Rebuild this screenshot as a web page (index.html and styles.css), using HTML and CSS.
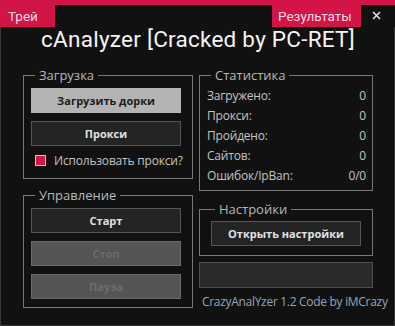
FILE: index.html
```html
<!DOCTYPE html>
<html lang="ru">

<head>
    <meta charset="UTF-8">
    <meta name="viewport" content="width=device-width, initial-scale=1.0">
    <title>cAnalyzer</title>
    <link rel="stylesheet" href="styles.css">
</head>

<body>
    <div class="window">
        <header class="titlebar">
            <div class="tab tab-tray">Трей</div>
            <div class="strip"></div>
            <div class="tab tab-results">Результаты</div>
            <div class="strip close">
                <svg width="9" height="9" viewBox="0 0 9 9">
                    <path d="M1 1 L8 8 M8 1 L1 8" stroke="#f2f2f2" stroke-width="1.4" />
                </svg>
            </div>
        </header>

        <div class="frame">
            <h1 class="title">cAnalyzer [Cracked by PC-RET]</h1>

            <div class="panels">
                <div class="column">
                    <fieldset class="group group-load">
                        <legend>Загрузка</legend>
                        <button class="btn btn-light">Загрузить дорки</button>
                        <button class="btn">Прокси</button>
                        <label class="check"><span class="box"></span>Использовать прокси?</label>
                    </fieldset>

                    <fieldset class="group group-control">
                        <legend>Управление</legend>
                        <button class="btn">Старт</button>
                        <button class="btn btn-off">Стоп</button>
                        <button class="btn btn-off">Пауза</button>
                    </fieldset>
                </div>

                <div class="column column-right">
                    <fieldset class="group group-stats">
                        <legend>Статистика</legend>
                        <div class="stat"><span>Загружено:</span><span>0</span></div>
                        <div class="stat"><span>Прокси:</span><span>0</span></div>
                        <div class="stat"><span>Пройдено:</span><span>0</span></div>
                        <div class="stat"><span>Сайтов:</span><span>0</span></div>
                        <div class="stat"><span>Ошибок/IpBan:</span><span>0/0</span></div>
                    </fieldset>

                    <fieldset class="group group-settings">
                        <legend>Настройки</legend>
                        <button class="btn">Открыть настройки</button>
                    </fieldset>

                    <div class="status"></div>
                    <p class="credit">CrazyAnalYzer 1.2 Code by iMCrazy</p>
                </div>
            </div>
        </div>
    </div>
</body>

</html>
```

FILE: styles.css
```css
:root {
    --bg: #111111;
    --red: #d31446;
    --line: #787878;
    --text: #c4c4c4;
}

body {
    margin: 0;
    background: var(--bg);
    font-family: "Open Sans", "Noto Sans", sans-serif;
}

.window {
    width: 395px;
    height: 326px;
    display: flex;
    flex-direction: column;
    background: var(--bg);
}

/* верхняя полоса с вкладками */
.titlebar {
    display: flex;
    height: 27px;
}

.tab {
    background: var(--red);
    color: #f4dde5;
    font-family: Roboto, sans-serif;
    font-size: 13.5px;
    line-height: 13px;
    padding-top: 10px;
    box-sizing: border-box;
}

.tab-tray {
    width: 55px;
    padding-left: 8px;
}

.tab-results {
    width: 89px;
    padding-left: 6px;
}

.strip {
    flex: 1;
    border-top: 5px solid var(--red);
}

.close {
    flex: 0 0 34px;
    padding: 6px 0 0 11px;
    box-sizing: border-box;
}

.close svg {
    display: block;
}

.frame {
    flex: 1;
    border: 1px solid #3a3a3a;
    border-top: 0;
    padding: 0 21px 0 22px;
}

.title {
    margin: 0;
    height: 39px;
    font-family: Roboto, sans-serif;
    font-size: 22.5px;
    font-weight: 400;
    line-height: 22px;
    padding-top: 1px;
    color: #f4f4f4;
    text-align: center;
    letter-spacing: 0.25px;
    white-space: nowrap;
    box-sizing: border-box;
}

.panels {
    display: flex;
    gap: 6px;
}

.column {
    width: 170px;
    display: flex;
    flex-direction: column;
}

.column-right {
    width: 174px;
}

.group {
    margin: 0;
    border: 1px solid var(--line);
    padding: 4px 7px 6px 7px;
    min-width: 0;
    display: flex;
    flex-direction: column;
}

.group legend {
    margin-left: 4px;
    padding: 0 4px;
    font-size: 13px;
    line-height: 18px;
    color: #b8b8b8;
}

.btn {
    width: 150px;
    height: 25px;
    margin: 0 0 8px 0;
    padding: 0;
    border: 1px solid #555555;
    background: #242424;
    color: #e2e2e2;
    font-family: inherit;
    font-size: 11px;
    font-weight: 700;
}

.btn-light {
    background: #b4b4b4;
    border-color: #b4b4b4;
    color: #1c1c1c;
}

.btn-off {
    background: #555555;
    border-color: #6a6a6a;
    color: #6c6c6c;
}

.group-load {
    padding-bottom: 10px;
}

.check {
    display: flex;
    align-items: center;
    gap: 8px;
    height: 16px;
    margin: -2px 0 0 4px;
    font-size: 12px;
    letter-spacing: -0.2px;
    white-space: nowrap;
    color: var(--text);
}

.box {
    flex: none;
    width: 9px;
    height: 9px;
    border: 1.5px solid #c8c8c8;
    background: var(--red);
}

.group-control {
    margin-top: 7px;
    padding-bottom: 0;
}

.group-stats {
    padding: 2px 6px 4px 7px;
}

.stat {
    display: flex;
    justify-content: space-between;
    height: 20px;
    line-height: 20px;
    font-size: 12px;
    letter-spacing: -0.2px;
    color: var(--text);
}

.group-settings {
    margin-top: 9px;
    padding: 3px 0 1px 11px;
}

.status {
    height: 24px;
    margin-top: 6px;
    border: 1px solid #4e4e4e;
    background: #2a2a2a;
}

.credit {
    margin: 5px 0 0 3px;
    font-size: 12px;
    letter-spacing: -0.3px;
    white-space: nowrap;
    color: #93a6bd;
}
```
